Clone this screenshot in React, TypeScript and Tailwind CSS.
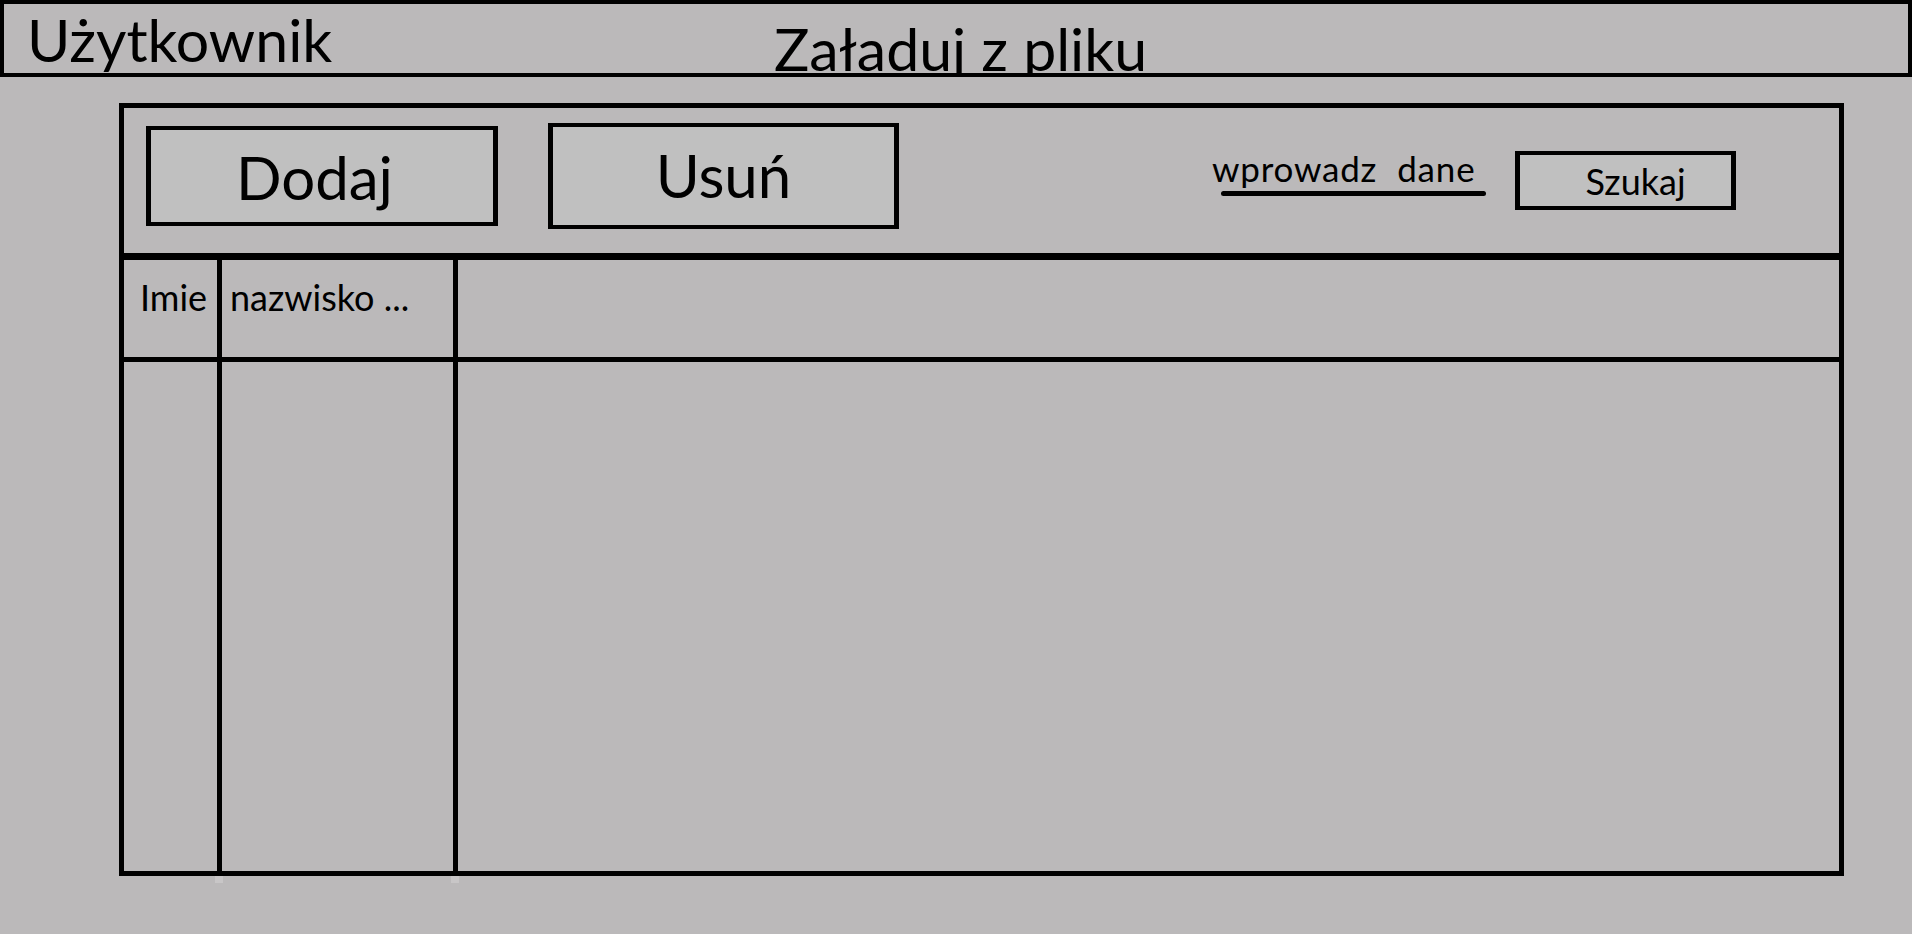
import React from "react";

export default function App() {
  return (
    <div className="w-[1912px] h-[934px] bg-[#bbb9ba] font-[Lato,sans-serif] text-black overflow-hidden">
      {/* top bar */}
      <div className="h-[77px] w-[1912px] border-4 border-black overflow-hidden flex items-start pl-[23px]">
        <div className="w-[747px] shrink-0">
          <span className="block mt-[6px] text-[59px] leading-none whitespace-nowrap">Użytkownik</span>
        </div>
        <span className="block mt-[15px] text-[59px] leading-none whitespace-nowrap">Załaduj z pliku</span>
      </div>

      {/* main panel */}
      <div className="relative mt-[26px] ml-[119px] w-[1725px] h-[773px] border-[5px] border-black flex flex-col">
        {/* toolbar */}
        <div className="h-[152px] shrink-0 border-b-[7px] border-black flex items-start pl-[22px]">
          <div className="mt-[18px] w-[352px] h-[100px] border-x-[5px] border-y-[4px] border-black bg-[#c0c0c0] flex items-center justify-center pt-[2px] pr-[15px]">
            <span className="text-[60px] leading-none">Dodaj</span>
          </div>
          <div className="ml-[50px] mt-[15px] w-[351px] h-[106px] border-x-[5px] border-y-[4px] border-black bg-[#c0c0c0] flex items-center justify-center pb-[2px]">
            <span className="text-[60px] leading-none">Usuń</span>
          </div>
          <div className="ml-[313px] w-[303px] shrink-0 mt-[43px] flex flex-col">
            <div className="flex gap-[20px] text-[35px] leading-none tracking-[0.8px] whitespace-nowrap">
              <span>wprowadz</span>
              <span>dane</span>
            </div>
            <div className="mt-[5px] ml-[9px] w-[265px] h-[5px] rounded-full bg-black" />
          </div>
          <div className="mt-[43px] w-[221px] h-[59px] border-x-[5px] border-y-[4px] border-black bg-[#c0c0c0] flex items-center justify-center pl-[20px] pt-[1px]">
            <span className="text-[36px] leading-none">Szukaj</span>
          </div>
        </div>

        {/* table header */}
        <div className="h-[102px] shrink-0 border-b-[5px] border-black flex">
          <div className="w-[98px] shrink-0 border-r-[5px] border-black pl-[16px] pt-[19px]">
            <span className="text-[36px] leading-none whitespace-nowrap">Imie</span>
          </div>
          <div className="w-[236px] shrink-0 border-r-[5px] border-black pl-[8px] pt-[19px]">
            <span className="text-[36px] leading-none whitespace-nowrap">nazwisko ...</span>
          </div>
          <div className="flex-1" />
        </div>

        {/* table body */}
        <div className="flex-1 flex">
          <div className="w-[98px] shrink-0 border-r-[5px] border-black" />
          <div className="w-[236px] shrink-0 border-r-[5px] border-black" />
          <div className="flex-1" />
        </div>

        <div className="absolute left-[91px] top-[768px] w-[8px] h-[7px] bg-[#c8c6c7]" />
        <div className="absolute left-[327px] top-[768px] w-[8px] h-[7px] bg-[#c8c6c7]" />
      </div>
    </div>
  );
}
